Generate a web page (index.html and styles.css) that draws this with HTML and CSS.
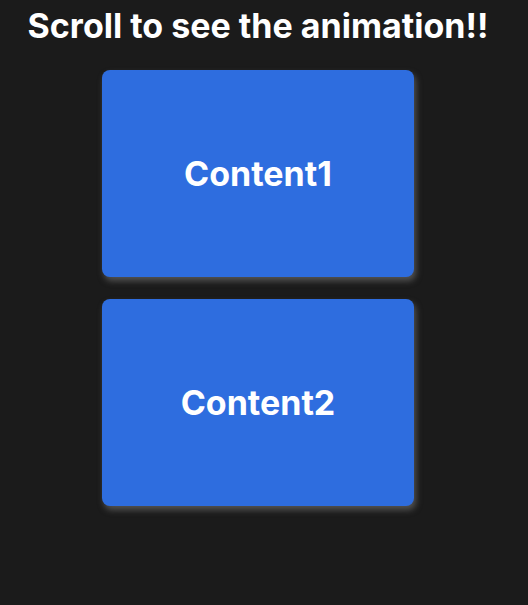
FILE: index.html
```html
<!DOCTYPE html>
<html>
<head>
<meta charset="utf-8">
<link rel="stylesheet" href="styles.css">
</head>
<body>
<div class="page">
  <h1 class="title">Scroll to see the animation!!</h1>
  <div class="card">Content1</div>
  <div class="card">Content2</div>
</div>
</body>
</html>
```
FILE: styles.css
```css
html, body {
  margin: 0;
  padding: 0;
  background: #1b1b1b;
}
body {
  font-family: Inter, "Noto Sans", sans-serif;
  color: #ffffff;
  height: 605px;
  overflow: hidden;
}
.page {
  width: 516px;
  display: flex;
  flex-direction: column;
  align-items: center;
  gap: 22px;
}
.title {
  margin: 0;
  padding-top: 6px;
  font-size: 34px;
  line-height: 40px;
  font-weight: 700;
  letter-spacing: 0;
  margin-bottom: 2px;
  white-space: nowrap;
}
.card {
  width: 312px;
  height: 207px;
  border-radius: 8px;
  background: #2e6ddf;
  display: flex;
  align-items: center;
  justify-content: center;
  font-size: 34px;
  font-weight: 700;
  box-shadow: 2px 4px 6px rgba(130, 130, 130, 0.55);
}
```
